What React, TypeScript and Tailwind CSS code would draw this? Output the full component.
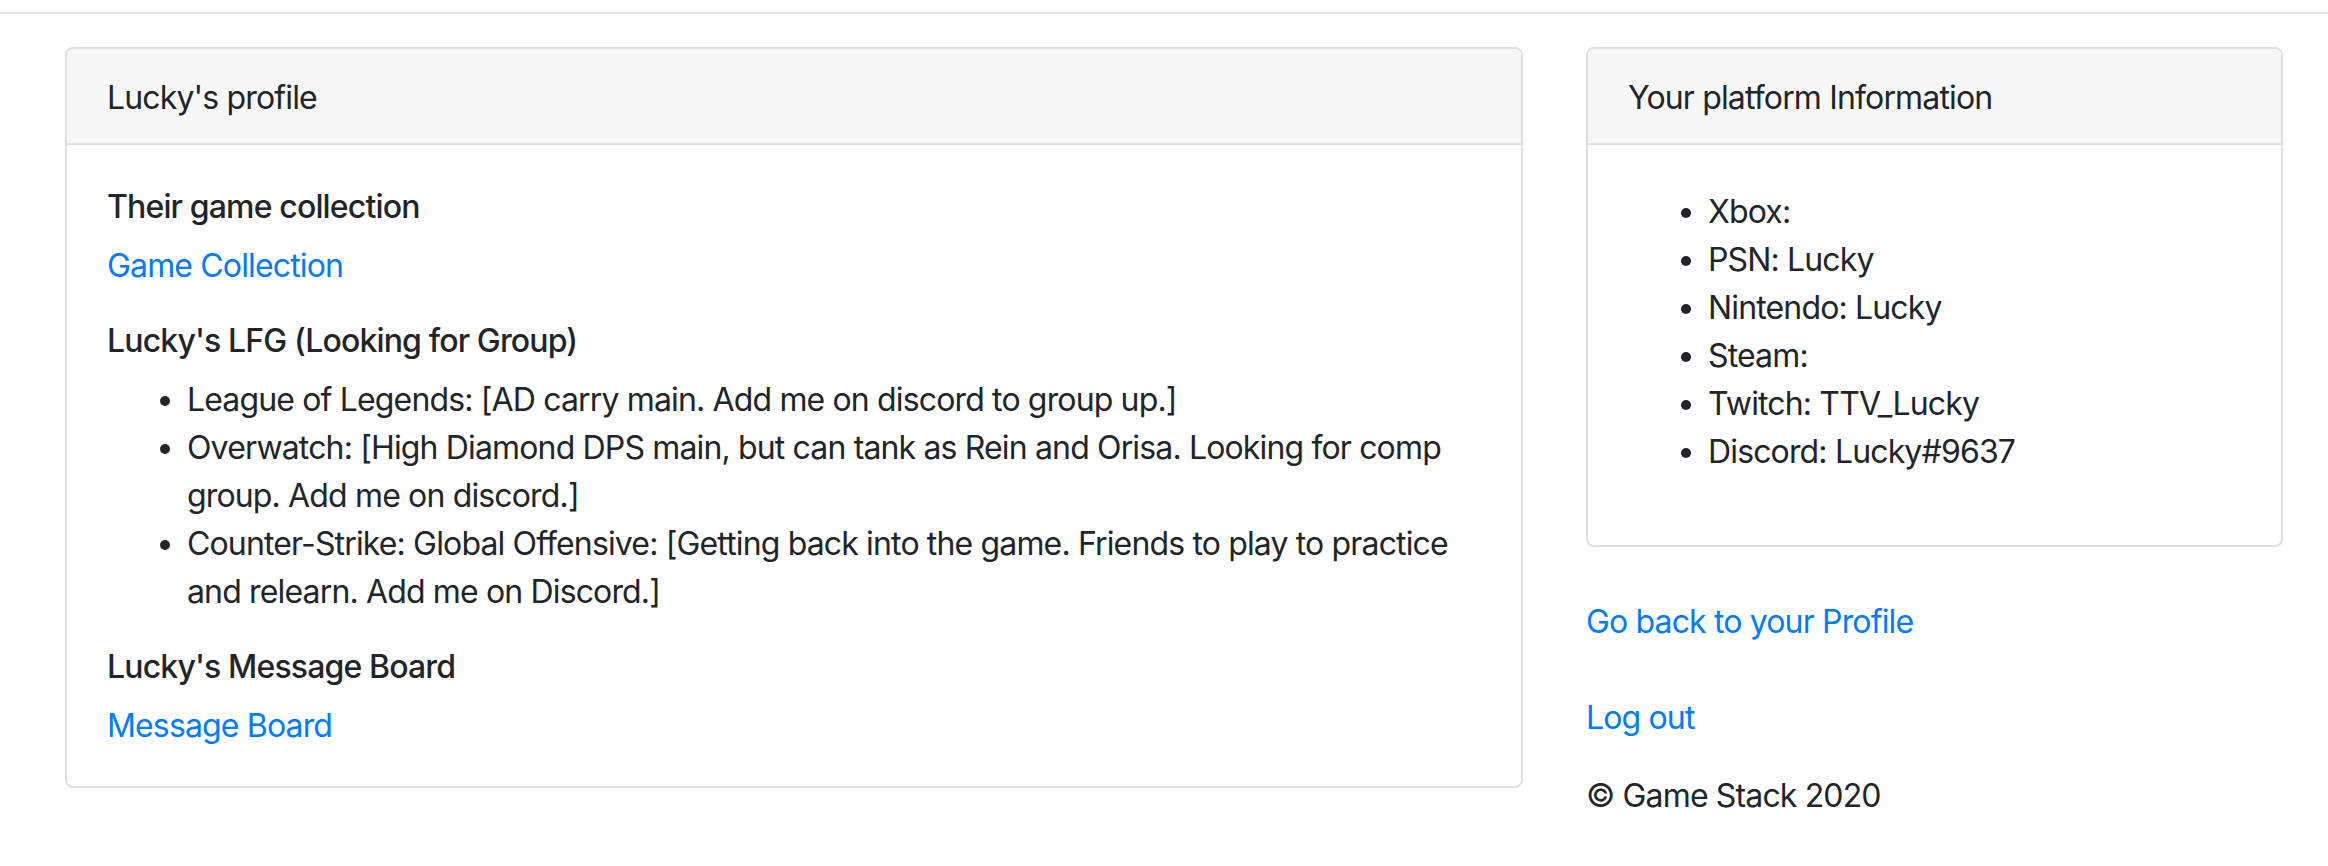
import React from "react";

const lfg = [
  "League of Legends: [AD carry main. Add me on discord to group up.]",
  "Overwatch: [High Diamond DPS main, but can tank as Rein and Orisa. Looking for comp group. Add me on discord.]",
  "Counter-Strike: Global Offensive: [Getting back into the game. Friends to play to practice and relearn. Add me on Discord.]",
];

const platforms = [
  "Xbox:",
  "PSN: Lucky",
  "Nintendo: Lucky",
  "Steam:",
  "Twitch: TTV_Lucky",
  "Discord: Lucky#9637",
];

export default function App() {
  return (
    <div className="min-h-screen bg-white font-['Inter','Liberation_Sans',sans-serif] text-[32px] leading-[48px] tracking-[-0.85px] text-[#212529]">
      <div className="h-[14px] border-b-2 border-[#e5e5e5]" />
      <div className="flex items-start gap-[63px] pl-[65px] pt-[33px]">
        {/* profile card */}
        <div className="w-[1458px] rounded-[8px] border-2 border-[#dfdfdf]">
          <div className="rounded-t-[6px] border-b-2 border-[#dfdfdf] bg-[#f7f7f7] px-[40px] pt-[25px] pb-[21px]">
            Lucky's profile
          </div>
          <div className="px-[40px] pt-[43px] pb-[36px]">
            <h6 className="mb-[16px] font-medium leading-[38px]">Their game collection</h6>
            <p className="mb-[32px]">
              <a href="#" className="text-[#007bff]">Game Collection</a>
            </p>
            <h6 className="mb-[16px] font-medium leading-[38px]">Lucky's LFG (Looking for Group)</h6>
            <ul className="mb-[32px] list-disc pl-[80px]">
              {lfg.map((item) => (
                <li key={item}>{item}</li>
              ))}
            </ul>
            <h6 className="mb-[16px] font-medium leading-[38px]">Lucky's Message Board</h6>
            <a href="#" className="block text-[#007bff]">Message Board</a>
          </div>
        </div>

        {/* platform column */}
        <div className="w-[697px]">
          <div className="rounded-[8px] border-2 border-[#dfdfdf]">
            <div className="rounded-t-[6px] border-b-2 border-[#dfdfdf] bg-[#f7f7f7] px-[40px] pt-[25px] pb-[21px]">
              Your platform Information
            </div>
            <div className="px-[40px] pt-[43px] pb-[37px]">
              <ul className="mb-[32px] list-disc pl-[80px]">
                {platforms.map((p) => (
                  <li key={p}>{p}</li>
                ))}
              </ul>
            </div>
          </div>
          <a href="#" className="mt-[51px] block text-[#007bff]">Go back to your Profile</a>
          <a href="#" className="mt-[48px] block text-[#007bff]">Log out</a>
          <p className="mt-[30px]">© Game Stack 2020</p>
        </div>
      </div>
    </div>
  );
}
